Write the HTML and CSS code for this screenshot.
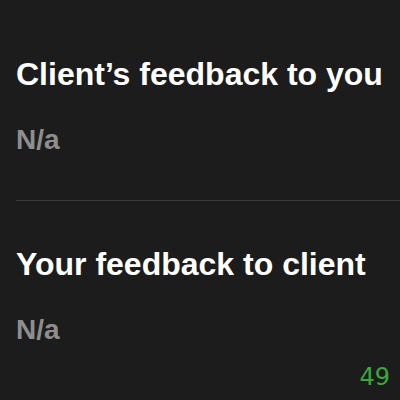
FILE: index.html
```
<!DOCTYPE html>
<html>
<head>
<meta charset="utf-8">
<link rel="stylesheet" href="styles.css">
</head>
<body>
<div class="screen">
  <section class="block">
    <h2 class="title">Client’s feedback to you</h2>
    <p class="value">N/a</p>
  </section>
  <div class="divider"></div>
  <section class="block second">
    <h2 class="title">Your feedback to client</h2>
    <p class="value">N/a</p>
  </section>
  <div class="counter">49</div>
</div>
</body>
</html>
```
FILE: styles.css
```
html, body {
  margin: 0;
  padding: 0;
  background: #1c1c1c;
}
.screen {
  width: 400px;
  height: 400px;
  box-sizing: border-box;
  padding-top: 56px;
  font-family: "Liberation Sans", Arial, sans-serif;
  overflow: hidden;
}
.block {
  padding-left: 16px;
}
.title {
  margin: 0;
  font-size: 32px;
  line-height: 36px;
  font-weight: bold;
  color: #ffffff;
  white-space: nowrap;
}
.value {
  margin: 33px 0 0 0;
  font-size: 28px;
  line-height: 30px;
  font-weight: bold;
  color: #8e8e8e;
}
.divider {
  margin: 45px 0 0 16px;
  height: 1px;
  background: #3a3a3a;
}
.second {
  margin-top: 45px;
}
.counter {
  margin-top: 18px;
  padding-right: 10px;
  text-align: right;
  font-family: "DejaVu Sans", sans-serif;
  font-size: 24px;
  line-height: 28px;
  color: #3aa83a;
}
```
